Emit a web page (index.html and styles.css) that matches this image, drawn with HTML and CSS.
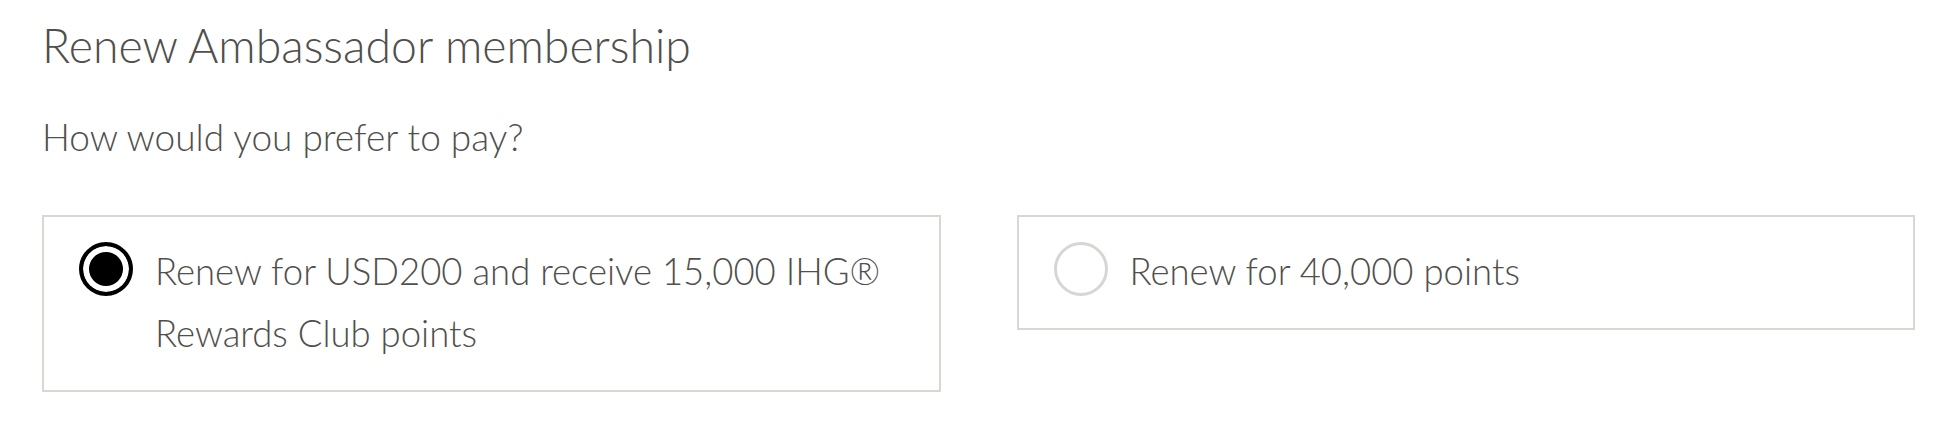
FILE: index.html
```html
<!DOCTYPE html>
<html lang="en">
<head>
    <meta charset="UTF-8">
    <meta name="viewport" content="width=device-width, initial-scale=1.0">
    <title>Renew Ambassador membership</title>
    <link rel="stylesheet" href="styles.css">
</head>
<body>
    <main class="page">
        <h1 class="title">Renew Ambassador membership</h1>
        <p class="question">How would you prefer to pay?</p>
        <div class="options">
            <label class="option">
                <span class="radio radio--checked"></span>
                <span class="option-text">Renew for USD200 and receive 15,000 IHG® Rewards Club points</span>
            </label>
            <label class="option">
                <span class="radio"></span>
                <span class="option-text">Renew for 40,000 points</span>
            </label>
        </div>
    </main>
</body>
</html>
```

FILE: styles.css
```css
body {
    margin: 0;
    padding: 0;
    background-color: #fff;
    font-family: Lato, "Open Sans", sans-serif;
    font-weight: 300;
    color: #4f4f4c;
}
.page {
    padding: 18px 43px 0 42px;
}
.title {
    margin: 0;
    font-size: 46.4px;
    line-height: 54px;
    font-weight: 300;
}
.question {
    margin: 43px 0 0;
    font-size: 37px;
    line-height: 44px;
}
.options {
    display: grid;
    grid-template-columns: 1fr 1fr;
    gap: 76px;
    align-items: start;
    margin-top: 56px;
}
.option {
    display: flex;
    align-items: flex-start;
    gap: 22px;
    padding: 23px 35px 26px;
    border: 2px solid #d8d8d2;
    cursor: pointer;
}
.radio {
    flex: none;
    width: 54px;
    height: 54px;
    margin-top: 2px;
    box-sizing: border-box;
    border-radius: 50%;
    border: 3px solid #d6d6d2;
    background-color: #fff;
}
.radio--checked {
    border: 4px solid #000;
    background-color: #000;
    box-shadow: inset 0 0 0 6px #fff;
}
.option-text {
    font-size: 36.5px;
    line-height: 62px;
}
```
